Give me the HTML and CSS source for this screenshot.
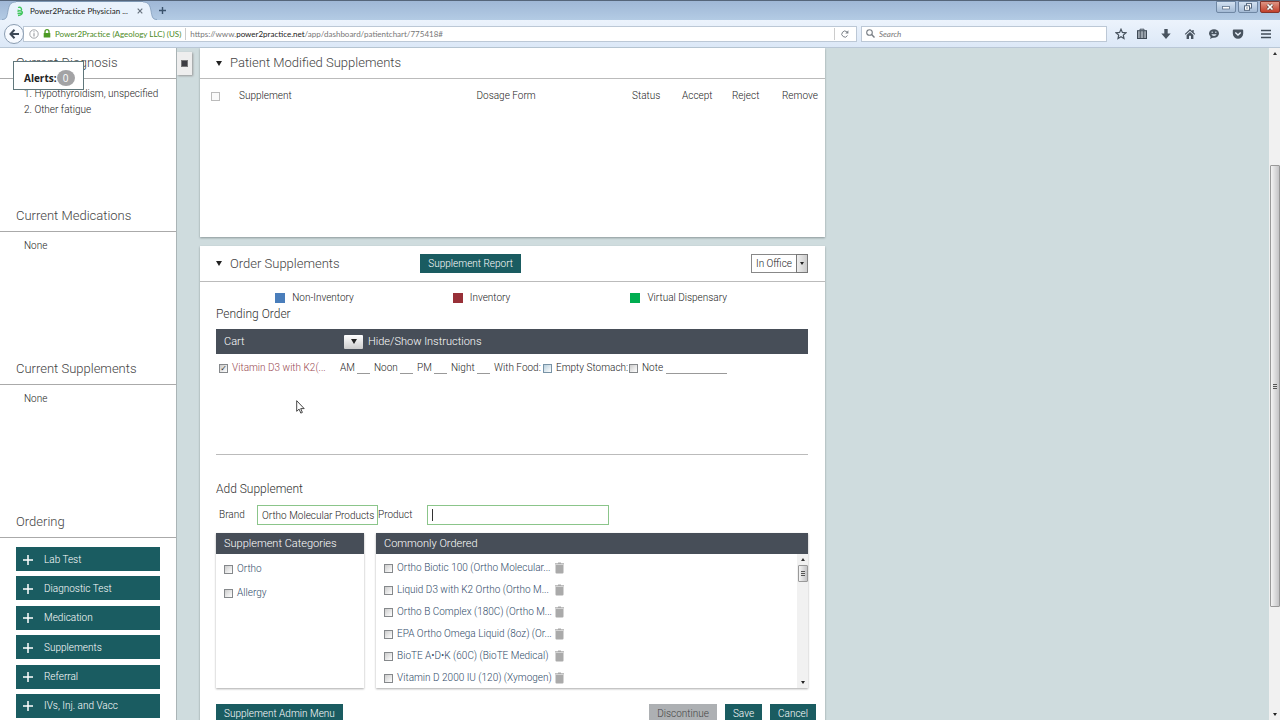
FILE: index.html
```html
<!DOCTYPE html>
<html lang="en">
<head>
<meta charset="utf-8">
<title>Power2Practice Physician Dashboard</title>
<link rel="stylesheet" href="styles.css">
</head>
<body>
<header class="chrome">
  <div class="titlebar">
    <div class="tab">
      <svg class="tab-edge" width="14" height="19" viewBox="0 0 14 19"><path d="M0 19C5 19 5 15 6 10S8 1 14 1V19Z" fill="#e9f2fc"/><path d="M0 18.500C5 18.500 5 15 6 10S8 1 14 1" fill="none" stroke="#6f8cab" stroke-width=".6"/></svg>
      <div class="tab-body">
        <svg width="8" height="11" viewBox="0 0 8 11" fill="none" stroke="#3fc65b" stroke-width="1.300"><path d="M2 1.500C5 .5 6.500 3 5 4.500L1.500 5.500M1.500 4L6 5.500C7.500 7.500 5 9.500 2 9.500M1.500 7.500L6 7"/></svg>
        <span class="tab-title">Power2Practice Physician ...</span>
        <button class="plain" aria-label="Close tab"><svg width="6" height="6" viewBox="0 0 6 6" stroke="#68737f" stroke-width="1.200"><path d="M.7.700l4.600 4.600M5.300.700L.700 5.300"/></svg></button>
      </div>
      <svg class="tab-edge" width="14" height="19" viewBox="0 0 14 19"><path d="M14 19C9 19 9 15 8 10S6 1 0 1V19Z" fill="#e9f2fc"/><path d="M14 18.500C9 18.500 9 15 8 10S6 1 0 1" fill="none" stroke="#6f8cab" stroke-width=".6"/></svg>
    </div>
    <button class="plain new-tab" aria-label="New tab"><svg width="7" height="7" viewBox="0 0 7 7" stroke="#3a526c" stroke-width="1.400"><path d="M3.500 0v7M0 3.500h7"/></svg></button>
    <div class="window-buttons">
      <button class="win" aria-label="Minimize"><svg width="10" height="8" viewBox="0 0 10 8"><rect x="1.500" y="3.500" width="7" height="2.500" fill="#fff" stroke="#62748a" stroke-width=".8"/></svg></button>
      <button class="win" aria-label="Restore"><svg width="10" height="8" viewBox="0 0 10 8" fill="#fff" stroke="#55687f"><rect x="3.500" y=".6" width="5" height="4.500"/><rect x="1.500" y="2.800" width="5" height="4.500"/><path d="M3.200 5h1.600"/></svg></button>
      <button class="win win-close" aria-label="Close"><svg width="10" height="8" viewBox="0 0 10 8"><path d="M2.500 1.500l5 5M7.500 1.500l-5 5" stroke="#58453f" stroke-width="3"/><path d="M2.500 1.500l5 5M7.500 1.500l-5 5" stroke="#fff" stroke-width="1.700"/></svg></button>
    </div>
  </div>
  <div class="toolbar">
    <button class="plain back" aria-label="Back"><svg width="10" height="10" viewBox="0 0 10 10" fill="none" stroke="#3c4856" stroke-width="2"><path d="M5.500.700L1.500 5l4 4.300M1.500 5H10"/></svg></button>
    <div class="address">
      <svg width="10" height="10" viewBox="0 0 10 10" fill="none" stroke="#8b8f94" stroke-width=".8"><circle cx="5" cy="5" r="4.200"/><path d="M5 4.200v3.300M5 2.300v1" stroke-width="1"/></svg>
      <svg width="8" height="9" viewBox="0 0 8 9"><path d="M2 4V2.700a2 2 0 014 0V4" fill="none" stroke="#4c9a24" stroke-width="1.300"/><rect x=".7" y="4" width="6.600" height="4.500" rx=".5" fill="#4c9a24"/></svg>
      <span class="identity">Power2Practice (Ageology LLC) (US)</span>
      <span class="url">https://www.<b>power2practice.net</b>/app/dashboard/patientchart/775418#</span>
      <button class="plain reload" aria-label="Reload"><svg width="8" height="8" viewBox="0 0 8 8"><path d="M6.500 5.500A3 3 0 116 2" fill="none" stroke="#7c8289"/><path d="M7.400.300v3.200H4.300z" fill="#7c8289"/></svg></button>
    </div>
    <div class="search">
      <svg width="9" height="9" viewBox="0 0 9 9" fill="none" stroke="#777d84" stroke-width="1.100"><circle cx="3.500" cy="3.500" r="2.800"/><path d="M5.600 5.600L8.500 8.500" stroke-width="1.400"/></svg>
      <input type="search" placeholder="Search" aria-label="Search">
    </div>
    <nav class="tools" aria-label="Browser tools">
      <button class="plain star" aria-label="Bookmark"><svg width="12" height="12" viewBox="0 0 12 12" fill="none" stroke="#48535f" stroke-width="1.200"><path d="M6 1.200l1.400 3.200 3.500.400-2.600 2.300.7 3.500L6 8.800l-3 1.800.7-3.500L1.100 4.800l3.500-.400z"/></svg></button>
      <button class="plain" aria-label="Library"><svg width="12" height="12" viewBox="0 0 12 12"><path d="M4 2.500V1.200h4v1.300" fill="none" stroke="#48535f"/><rect x="1.500" y="2.700" width="9" height="7.800" fill="#9aa3ac" stroke="#3f4a56"/><path d="M4.300 3v7.500M7.700 3v7.500" stroke="#3f4a56" stroke-width=".8"/></svg></button>
      <button class="plain" aria-label="Downloads"><svg width="12" height="12" viewBox="0 0 12 12" fill="#48535f"><path d="M4.300 1h3.400v4.500h3L6 11 1.300 5.500h3z"/></svg></button>
      <button class="plain" aria-label="Home"><svg width="12" height="12" viewBox="0 0 12 12" fill="#48535f"><path d="M6 1L.8 6l.8.800L6 2.700l4.400 4.100.8-.800-1.500-1.500V2H8.300v1.200z"/><path d="M2.600 7L6 3.900 9.400 7v4H7V7.700H5V11H2.600z"/></svg></button>
      <button class="plain" aria-label="Chat"><svg width="12" height="12" viewBox="0 0 12 12"><ellipse cx="6" cy="5.500" rx="5" ry="4.200" fill="#48535f"/><path d="M3 8l-1 3 4-2z" fill="#48535f"/><path d="M3.500 6.200h5C8 8.500 4 8.500 3.500 6.200z" fill="#dfe9f5"/><path d="M3.500 4.200h1.500M7 4.200h1.500" stroke="#dfe9f5"/></svg></button>
      <button class="plain" aria-label="Pocket"><svg width="12" height="12" viewBox="0 0 12 12"><path d="M1.800 1.500h8.400q1 0 1 1V5.500a5.200 5.200 0 01-10.400 0V2.500q0-1 1-1z" fill="#48535f"/><path d="M3.300 4.500L6 7l2.700-2.500" fill="none" stroke="#e8f0fa" stroke-width="1.400"/></svg></button>
      <button class="plain menu" aria-label="Menu"><svg width="12" height="10" viewBox="0 0 12 10" stroke="#414c58" stroke-width="1.500"><path d="M1 1.500h10M1 5h10M1 8.500h10"/></svg></button>
    </nav>
  </div>
</header>

<div class="page">
  <aside class="sidebar">
    <div class="alerts">Alerts:<span class="count">0</span></div>
    <section class="side-section">
      <h2>Current Diagnosis</h2>
      <ol><li>1. Hypothyroidism, unspecified</li><li>2. Other fatigue</li></ol>
    </section>
    <section class="side-section"><h2>Current Medications</h2><p>None</p></section>
    <section class="side-section"><h2>Current Supplements</h2><p>None</p></section>
    <section class="ordering">
      <h2>Ordering</h2>
      <div class="order-buttons">
        <button class="order"><svg width="12" height="12" viewBox="0 0 12 12"><path d="M6 1v10M1 6h10"/></svg>Lab Test</button>
        <button class="order"><svg width="12" height="12" viewBox="0 0 12 12"><path d="M6 1v10M1 6h10"/></svg>Diagnostic Test</button>
        <button class="order"><svg width="12" height="12" viewBox="0 0 12 12"><path d="M6 1v10M1 6h10"/></svg>Medication</button>
        <button class="order"><svg width="12" height="12" viewBox="0 0 12 12"><path d="M6 1v10M1 6h10"/></svg>Supplements</button>
        <button class="order"><svg width="12" height="12" viewBox="0 0 12 12"><path d="M6 1v10M1 6h10"/></svg>Referral</button>
        <button class="order"><svg width="12" height="12" viewBox="0 0 12 12"><path d="M6 1v10M1 6h10"/></svg>IVs, Inj. and Vacc</button>
      </div>
    </section>
    <button class="collapse" aria-label="Collapse sidebar"><span></span></button>
  </aside>

  <main class="main">
    <div class="column">
      <section class="panel modified">
        <div class="panel-head"><span class="arrow"></span><h1>Patient Modified Supplements</h1></div>
        <table>
          <thead><tr>
            <th class="c-check"><input type="checkbox" class="box pale" aria-label="Select all"></th>
            <th class="c-name">Supplement</th><th>Dosage Form</th><th class="c-act">Status</th><th class="c-act">Accept</th><th class="c-act">Reject</th><th class="c-last">Remove</th>
          </tr></thead>
        </table>
      </section>

      <section class="panel order-panel">
        <div class="panel-head tall">
          <span class="arrow"></span><h1>Order Supplements</h1>
          <button class="btn report">Supplement Report</button>
          <div class="select-wrap"><select aria-label="Order location"><option>In Office</option></select><span class="select-arrow"><i class="down"></i></span></div>
        </div>
        <div class="panel-body">
          <div class="legend">
            <span><i class="blue"></i>Non-Inventory</span><span><i class="red"></i>Inventory</span><span><i class="green"></i>Virtual Dispensary</span>
          </div>
          <h3>Pending Order</h3>
          <div class="bar cart-bar"><span class="cart-title">Cart</span><button class="drop" aria-label="Hide or show instructions"><span class="arrow"></span></button><span>Hide/Show Instructions</span></div>
          <div class="cart">
            <div class="cart-row">
              <label class="item"><input type="checkbox" class="box" checked>Vitamin D3 with K2(...</label>
              <label>AM<input type="text" class="blank"></label>
              <label>Noon<input type="text" class="blank"></label>
              <label>PM<input type="text" class="blank"></label>
              <label>Night<input type="text" class="blank"></label>
              <label>With Food:<input type="checkbox" class="box cool"></label>
              <label>Empty Stomach:<input type="checkbox" class="box"></label>
              <label>Note<input type="text" class="blank note"></label>
            </div>
          </div>
          <h3 class="add">Add Supplement</h3>
          <div class="fields">
            <label for="brand">Brand</label><input id="brand" class="field brand" type="text" value="Ortho Molecular Products">
            <label for="product">Product</label><div class="product-wrap"><input id="product" class="field" type="text"><span class="caret"></span></div>
          </div>
          <div class="lists">
            <section class="list">
              <h4 class="bar">Supplement Categories</h4>
              <div class="categories">
                <label><input type="checkbox" class="box">Ortho</label>
                <label><input type="checkbox" class="box">Allergy</label>
              </div>
            </section>
            <section class="list">
              <h4 class="bar">Commonly Ordered</h4>
              <div class="common">
                <div class="products">
                  <div class="product"><label><input type="checkbox" class="box">Ortho Biotic 100 (Ortho Molecular...</label><button class="plain" aria-label="Delete"><svg width="9" height="12" viewBox="0 0 9 12"><path d="M0 1.200h3V.500h3v.700h3v1.300H0zM.500 3h8v7.500q0 1-1 1h-6q-1 0-1-1z"/></svg></button></div>
                  <div class="product"><label><input type="checkbox" class="box">Liquid D3 with K2 Ortho (Ortho M...</label><button class="plain" aria-label="Delete"><svg width="9" height="12" viewBox="0 0 9 12"><path d="M0 1.200h3V.500h3v.700h3v1.300H0zM.500 3h8v7.500q0 1-1 1h-6q-1 0-1-1z"/></svg></button></div>
                  <div class="product"><label><input type="checkbox" class="box">Ortho B Complex (180C) (Ortho M...</label><button class="plain" aria-label="Delete"><svg width="9" height="12" viewBox="0 0 9 12"><path d="M0 1.200h3V.500h3v.700h3v1.300H0zM.500 3h8v7.500q0 1-1 1h-6q-1 0-1-1z"/></svg></button></div>
                  <div class="product"><label><input type="checkbox" class="box">EPA Ortho Omega Liquid (8oz) (Or...</label><button class="plain" aria-label="Delete"><svg width="9" height="12" viewBox="0 0 9 12"><path d="M0 1.200h3V.500h3v.700h3v1.300H0zM.500 3h8v7.500q0 1-1 1h-6q-1 0-1-1z"/></svg></button></div>
                  <div class="product"><label><input type="checkbox" class="box">BioTE A•D•K (60C) (BioTE Medical)</label><button class="plain" aria-label="Delete"><svg width="9" height="12" viewBox="0 0 9 12"><path d="M0 1.200h3V.500h3v.700h3v1.300H0zM.500 3h8v7.500q0 1-1 1h-6q-1 0-1-1z"/></svg></button></div>
                  <div class="product"><label><input type="checkbox" class="box">Vitamin D 2000 IU (120) (Xymogen)</label><button class="plain" aria-label="Delete"><svg width="9" height="12" viewBox="0 0 9 12"><path d="M0 1.200h3V.500h3v.700h3v1.300H0zM.500 3h8v7.500q0 1-1 1h-6q-1 0-1-1z"/></svg></button></div>
                </div>
                <div class="scroll"><i class="up"></i><div class="thumb"><span class="grip"></span></div><i class="down"></i></div>
              </div>
            </section>
          </div>
          <div class="actions">
            <button class="btn">Supplement Admin Menu</button>
            <button class="btn off" disabled>Discontinue</button>
            <button class="btn">Save</button>
            <button class="btn">Cancel</button>
          </div>
        </div>
      </section>
    </div>
  </main>
  <div class="scroll page-scroll"><i class="up"></i><div class="track-before"></div><div class="thumb"><span class="grip"></span></div><div class="track-after"></div><i class="down"></i></div>
</div>
<svg class="pointer" width="9" height="14" viewBox="0 0 9 14"><path d="M.7.700v10.600l2.400-2.200 1.700 4 1.600-.700-1.700-3.800h3.500z" fill="#fff" stroke="#333" stroke-width=".9"/></svg>
</body>
</html>
```
FILE: styles.css
```css
* { box-sizing: border-box; }
body {
  margin: 0;
  height: 100vh;
  display: flex;
  flex-direction: column;
  overflow: hidden;
  font: 300 10px/12px Roboto, "Liberation Sans", sans-serif;
  color: #222;
  background: #cfdcde;
}
button, input, select { font: inherit; color: inherit; margin: 0; }
button { border: 0; padding: 0; }
h1, h2, h3, h4, p, ol { margin: 0; padding: 0; font-weight: 300; }
ol { list-style: none; }
svg { flex: none; display: block; }
.plain { background: none; display: flex; align-items: center; justify-content: center; }

/* Browser window */
.chrome { flex: none; font: 400 8px/12px Lato, "Noto Sans", sans-serif; }
.titlebar {
  height: 20px;
  display: flex;
  align-items: flex-end;
  background: linear-gradient(#9fb7d6, #b3cbe4);
  border-top: 1px solid #55657a;
}
.tab { display: flex; margin-left: 2px; }
.tab-body {
  width: 127px;
  display: flex;
  align-items: center;
  background: #e9f2fc;
  border-top: 1px solid #7d97b3;
}
.tab-title { margin: 0 auto 0 6px; color: #222; white-space: nowrap; }
.new-tab { margin: 0 0 6px 2px; }
.window-buttons { display: flex; gap: 2px; margin-left: auto; align-self: flex-start; }
.win {
  width: 20px;
  height: 12px;
  display: flex;
  align-items: center;
  justify-content: center;
  border: 1px solid #6f87a4;
  border-radius: 0 0 2px 2px;
  background: linear-gradient(#d3e1f1, #a3bad5);
}
.win-close { background: linear-gradient(#dd9584, #c3402b); border-color: #85352b; }
.toolbar {
  height: 28px;
  display: flex;
  align-items: center;
  padding: 0 8px 0 4px;
  background: linear-gradient(#ecf3fc, #dce8f7);
  border-bottom: 1px solid #b9c7d6;
}
.back {
  width: 20px;
  height: 20px;
  border: 1px solid #8b9db1;
  border-radius: 50%;
  background: #f7faff;
  z-index: 1;
}
.address {
  flex: 837 1 0;
  height: 16px;
  display: flex;
  align-items: center;
  gap: 4px;
  padding-left: 5px;
  margin-left: -1px;
  background: #fff;
  border: 1px solid #bcc8d6;
}
.identity { color: #4c8a25; padding-right: 4px; border-right: 1px solid #ccc; white-space: nowrap; }
.url { color: #777; margin-right: auto; white-space: nowrap; }
.url b { font-weight: 400; color: #222; }
.reload { width: 22px; height: 12px; border-left: 1px solid #ccc; }
.search {
  flex: 243 1 0;
  height: 16px;
  display: flex;
  align-items: center;
  gap: 4px;
  margin-left: 4px;
  padding-left: 4px;
  background: #fff;
  border: 1px solid #bcc8d6;
}
.search input { flex: 1; min-width: 0; border: 0; padding: 0; background: none; font-style: italic; outline: none; }
.search input::placeholder { color: #777; }
.tools { display: flex; align-items: center; margin-left: 8px; gap: 12px; }
.star { margin-right: -3px; }
.menu { margin-left: 4px; }

/* Sidebar */
.page { flex: 1; min-height: 0; display: flex; }
.sidebar {
  position: relative;
  flex: none;
  width: 177px;
  background: #fff;
  border-right: 1px solid #aab4b6;
}
h1, h2 { font-size: 13px; line-height: 16px; color: #444; }
.side-section { height: 153px; }
.sidebar h2 { height: 31px; padding: 7px 16px; border-bottom: 1px solid #aaa; }
.sidebar p, .sidebar li { padding-left: 24px; }
.sidebar p { padding-top: 8px; }
.sidebar ol { padding-top: 9px; display: grid; gap: 4px; }
.alerts {
  position: absolute;
  left: 13px;
  top: 13px;
  width: 71px;
  height: 29px;
  padding: 4px 0 0 10px;
  display: flex;
  align-items: center;
  background: #fff;
  border: 1px solid #60777b;
  font-family: "Open Sans", sans-serif;
  font-weight: 700;
  color: #222;
}
.count {
  width: 18px;
  height: 16px;
  line-height: 16px;
  border-radius: 50%;
  background: #a3a3a5;
  color: #fff;
  font-weight: 400;
  text-align: center;
}
.order-buttons {
  min-height: 171px;
  margin: 9px 16px 0;
  display: flex;
  flex-direction: column;
  justify-content: space-between;
}
.order {
  height: 24px;
  padding: 1px 0 0 6px;
  display: flex;
  align-items: center;
  gap: 10px;
  color: #fff;
  background: #1a5c61;
}
.order path { stroke: #fff; stroke-width: 1.5; }
.collapse {
  position: absolute;
  left: 177px;
  top: 4px;
  width: 15px;
  height: 23px;
  display: grid;
  place-items: center;
  background: #eee;
  box-shadow: 1px 1px 2px #999;
}
.collapse span { width: 7px; height: 7px; background: #3d3d42; border: 1px solid #777; }

/* Main panels */
.main {
  flex: 1;
  min-width: 0;
  display: grid;
  grid-template-columns: minmax(600px, 625fr) 444fr;
  padding-left: 23px;
}
.column { min-width: 0; display: flex; flex-direction: column; gap: 9px; }
.panel { background: #fff; box-shadow: 0 1px 2px #8c9899; }
.modified { flex: none; height: 189px; }
.panel-head {
  height: 31px;
  display: flex;
  align-items: center;
  padding: 0 17px 0 16px;
  border-bottom: 1px solid #bbb;
}
.tall { height: 36px; }
.arrow { border: 3px solid transparent; border-top: 5px solid #222; border-bottom: 0; }
.panel-head h1 { margin-left: 8px; }
.report { margin-left: auto; margin-right: 230px; }
.btn {
  height: 19px;
  padding: 0 8px;
  background: #1a5c61;
  color: #fff;
  white-space: nowrap;
}
.off { background: #adb0b3; color: #444; }
.select-wrap { position: relative; width: 57px; height: 19px; }
select {
  width: 100%;
  height: 100%;
  appearance: none;
  border: 1px solid #888;
  border-radius: 0;
  background: #fff;
  padding: 0 0 0 4px;
}
.select-arrow {
  position: absolute;
  right: 0;
  top: 0;
  width: 12px;
  height: 19px;
  display: grid;
  place-items: center;
  border: 1px solid #777;
  background: linear-gradient(90deg, #eee, #ccc);
  pointer-events: none;
}
.up, .down { width: 0; height: 0; border: 2px solid transparent; }
.down { border-top: 3px solid #222; border-bottom: 0; }
.up { border-bottom: 3px solid #333; border-top: 0; }
table { width: 100%; table-layout: fixed; border-collapse: collapse; margin-top: 11px; }
th { padding: 0; font-weight: 300; text-align: left; vertical-align: middle; }
.c-check { width: 39px; padding-left: 11px; }
.c-name { width: 38%; }
.c-act { width: 50px; }
.c-last { width: 43px; }
.box {
  appearance: none;
  flex: none;
  display: grid;
  place-items: center;
  width: 9px;
  height: 9px;
  border: 1px solid #85888b;
  background: linear-gradient(135deg, #ccc, #fff);
}
.box:checked::after { content: "✓"; font: 700 8px/8px "DejaVu Sans", sans-serif; color: #333; }
.cool { border-color: #7893a6; background: linear-gradient(135deg, #b8cfdd, #fff); }
.pale { border-color: #bbb; background: #fafafa; }
.order-panel { flex: 1; }
.panel-body { padding: 10px 17px 0 16px; }
.legend { display: grid; grid-template-columns: repeat(3, 1fr); padding-left: 10%; }
.legend span { display: flex; align-items: center; gap: 7px; }
.legend i { width: 10px; height: 10px; }
.blue { background: #4a7ebb; }
.red { background: #983038; }
.green { background: #00ad50; }
h3 { font-size: 12px; line-height: 14px; color: #333; margin-top: 3px; }
.bar {
  font-size: 11px;
  line-height: 14px;
  background: #474e58;
  color: #fff;
  display: flex;
  align-items: center;
  padding: 0 8px;
  height: 21px;
}
.cart-bar { height: 25px; margin-top: 8px; }
.cart-title { width: 120px; }
.drop {
  width: 19px;
  height: 14px;
  margin-right: 5px;
  display: grid;
  place-items: center;
  border-radius: 1px;
  background: linear-gradient(#fff, #ccc);
}
.cart { height: 101px; border-bottom: 1px solid #bbb; padding: 8px 0 0 3px; }
.cart-row {
  display: grid;
  grid-template-columns: 117px 30px 39px 30px 39px 58px 82px 85px;
  column-gap: 4px;
}
.cart-row label { display: flex; align-items: center; justify-content: space-between; white-space: nowrap; }
.cart-row .item { justify-content: flex-start; gap: 4px; color: #984850; }
.blank { width: 13px; height: 12px; padding: 0; border: 0; border-bottom: 1px solid #999; background: none; }
.note { width: 61px; }
.add { margin-top: 27px; }
.fields { display: flex; align-items: center; margin-top: 9px; padding-left: 3px; }
.fields label:first-child { width: 38px; }
.fields label { width: 49px; }
.field { width: 100%; height: 20px; border: 1px solid #8bc58a; padding: 1px 0 0 4px; outline: none; background: #fff; }
.brand { width: 121px; }
.product-wrap { position: relative; width: 182px; }
.caret { position: absolute; left: 5px; top: 4px; width: 1px; height: 12px; background: #333; }
.lists { display: grid; grid-template-columns: 148px 1fr; gap: 12px; margin-top: 8px; }
.list { height: 155px; box-shadow: 0 1px 2px #aaa; display: flex; flex-direction: column; }
.list .bar { flex: none; }
.list label { display: flex; align-items: center; gap: 4px; color: #2f4a68; }
.categories { display: grid; gap: 12px; padding: 9px 8px; }
.common { flex: 1; min-height: 0; display: flex; }
.products { flex: 1; padding: 3px 8px 0; overflow: hidden; }
.product { height: 22px; display: flex; align-items: center; white-space: nowrap; }
.product label { width: 171px; }
.product path { fill: #aaa; }
.scroll {
  width: 11px;
  display: flex;
  flex-direction: column;
  align-items: center;
  background: #f1f1f1;
  padding: 4px 0;
}
.thumb {
  width: 10px;
  height: 17px;
  margin: 4px 0 auto;
  border: 1px solid #999;
  border-radius: 1px;
  background: linear-gradient(90deg, #f4f4f4, #c4c4c6);
  display: grid;
  place-items: center;
}
.grip { width: 4px; height: 5px; border-top: 1px solid #555; border-bottom: 1px solid #555; background: linear-gradient(#ddd 1px, #555 1px, #555 2px, #ddd 2px); }
.actions { display: flex; gap: 8px; margin: 16px -8px 0 0; }
.actions .btn:first-child { margin-right: auto; }
.page-scroll { flex: none; }
.page-scroll .track-before { flex: 110; }
.page-scroll .thumb { flex: 442; margin: 0; }
.page-scroll .track-after { flex: 106; }
.pointer { position: absolute; left: 296px; top: 400px; }
```
